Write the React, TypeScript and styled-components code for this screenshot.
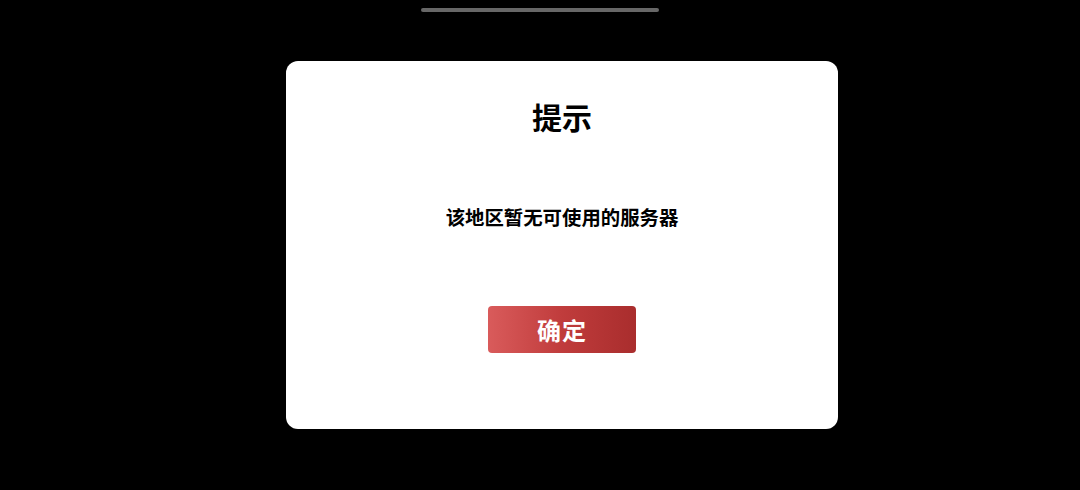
import styled, { createGlobalStyle } from "styled-components";

const Global = createGlobalStyle`
  html, body {
    margin: 0;
    padding: 0;
    background: #000;
    font-family: "Noto Sans CJK SC", "Noto Sans", sans-serif;
  }
`;

const Screen = styled.div`
  width: 1080px;
  height: 490px;
  background: #000;
  display: flex;
  flex-direction: column;
  overflow: hidden;
`;

const IndicatorRow = styled.div`
  display: flex;
  justify-content: center;
  padding-top: 8px;
  height: 61px;
  box-sizing: border-box;
`;

const HomeIndicator = styled.div`
  width: 238px;
  height: 4px;
  border-radius: 2px;
  background: #676767;
`;

const DialogRow = styled.div`
  display: flex;
  padding-left: 286px;
`;

const Dialog = styled.div`
  width: 552px;
  height: 368px;
  box-sizing: border-box;
  background: #fff;
  border-radius: 12px;
  display: flex;
  flex-direction: column;
  align-items: center;
  padding-top: 35px;
`;

const Title = styled.h2`
  margin: 0;
  font-size: 30px;
  line-height: 40px;
  font-weight: 700;
  color: #000;
`;

const Message = styled.p`
  margin: 67px 0 0;
  font-size: 19.4px;
  line-height: 28px;
  font-weight: 700;
  color: #000;
`;

const ConfirmButton = styled.button`
  margin-top: 75px;
  width: 148px;
  height: 47px;
  border: none;
  border-radius: 4px;
  background: linear-gradient(90deg, #d95b5b 0%, #c03c3c 50%, #a92d2d 100%);
  color: #fff;
  font-family: inherit;
  font-size: 24px;
  font-weight: 700;
  letter-spacing: 1px;
  cursor: pointer;
`;

export default function App() {
  return (
    <>
      <Global />
      <Screen>
        <IndicatorRow>
          <HomeIndicator />
        </IndicatorRow>
        <DialogRow>
          <Dialog>
            <Title>提示</Title>
            <Message>该地区暂无可使用的服务器</Message>
            <ConfirmButton>确定</ConfirmButton>
          </Dialog>
        </DialogRow>
      </Screen>
    </>
  );
}
